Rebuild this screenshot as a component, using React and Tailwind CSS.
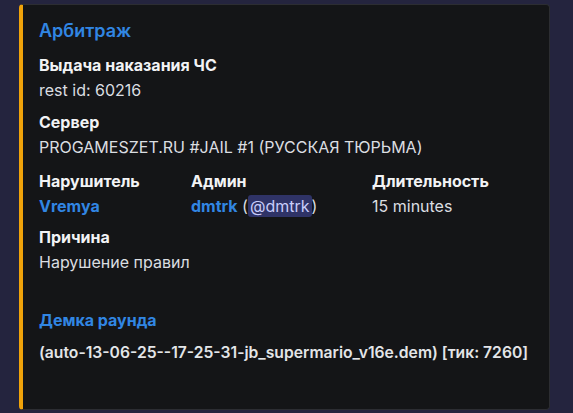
import React from 'react';

const Field = ({ name, children, className = '' }) => (
  <div className={`flex flex-col gap-[5px] ${className}`}>
    <div className="text-[16px] leading-5 font-bold text-[#f2f3f5]">{name}</div>
    <div className="text-[16px] leading-5 text-[#dbdee1]">{children}</div>
  </div>
);

export default function App() {
  return (
    <div
      className="w-[573px] h-[413px] bg-[#24243e] pt-[4px] pl-[19px] overflow-hidden"
      style={{ fontFamily: 'Inter, "Noto Sans", sans-serif' }}
    >
      <div className="w-[531px] h-[406px] bg-[#141517] border border-[#2c2d32] border-l-4 border-l-[#f0a30a] rounded-[4px] pl-[16px] pr-[16px] pt-[14px]">
        <div className="text-[18px] leading-6 font-semibold text-[#3186e3]">Арбитраж</div>

        <div className="mt-[12px] flex flex-col gap-[12px]">
          <Field name="Выдача наказания ЧС">rest id: 60216</Field>
          <Field name="Сервер">PROGAMESZET.RU #JAIL #1 (РУССКАЯ ТЮРЬМА)</Field>
          <div className="mt-[2px] grid grid-cols-[152px_181px_1fr]">
            <Field name="Нарушитель">
              <span className="font-bold text-[#3186e3]">Vremya</span>
            </Field>
            <Field name="Админ">
              <span className="font-bold text-[#3186e3]">dmtrk</span>{' '}(
              <span className="bg-[#2f3367] text-[#c9cdfb] rounded-[3px] px-[2px] py-[1px]">@dmtrk</span>)
            </Field>
            <Field name="Длительность">15 minutes</Field>
          </div>
          <Field name="Причина" className="-mt-[1px]">Нарушение правил</Field>
        </div>

        <div className="mt-[38px] text-[16px] leading-5 font-bold text-[#3186e3]">Демка раунда</div>
        <div className="mt-[13px] text-[15.7px] leading-5 font-semibold text-[#e3e5e8]">
          (auto-13-06-25--17-25-31-jb_supermario_v16e.dem) [тик: 7260]
        </div>
      </div>
    </div>
  );
}
